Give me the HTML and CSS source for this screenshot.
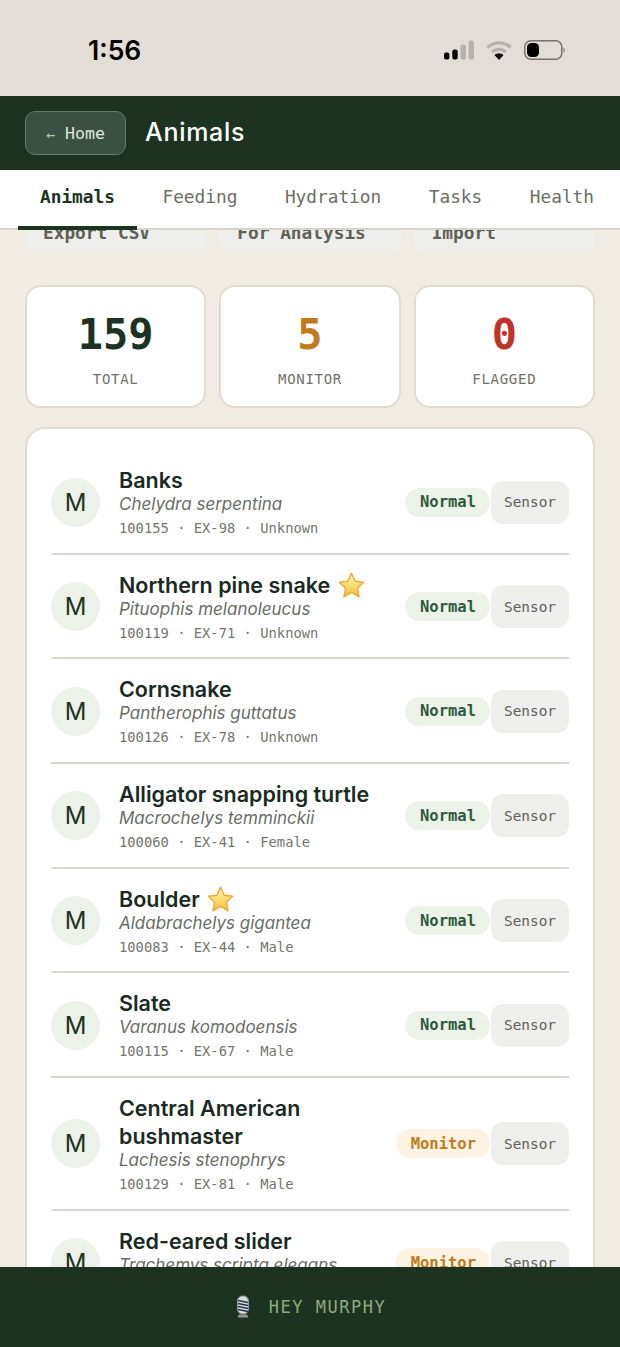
FILE: index.html
```html
<!DOCTYPE html>
<html lang="en">
<head>
    <meta charset="UTF-8">
    <meta name="viewport" content="width=device-width, initial-scale=1.0">
    <title>Animals</title>
    <link rel="stylesheet" href="styles.css">
</head>
<body>
    <svg class="defs" width="0" height="0" aria-hidden="true">
        <defs>
            <linearGradient id="starFill" x1="0" y1="0" x2="0" y2="1">
                <stop offset="0" stop-color="#fff3b8"/>
                <stop offset="0.55" stop-color="#fddc6a"/>
                <stop offset="1" stop-color="#f6b73c"/>
            </linearGradient>
            <symbol id="star" viewBox="0 0 28 28">
                <path d="M14 2.2l3.5 7.7 8.3 1-6.1 5.7 1.6 8.3L14 20.7l-7.3 4.2 1.6-8.3-6.1-5.7 8.3-1z" fill="url(#starFill)" stroke="#eeaa3a" stroke-width="1.4" stroke-linejoin="round"/>
            </symbol>
        </defs>
    </svg>

    <div class="status-bar">
        <span class="clock">1:56</span>
        <div class="status-icons">
            <svg width="30" height="20" viewBox="0 0 30 20">
                <rect x="0" y="12.500" width="5.400" height="7" rx="2" fill="#000"/>
                <rect x="8.300" y="9.500" width="5.400" height="10" rx="2" fill="#000"/>
                <rect x="16.600" y="4.500" width="5.400" height="15" rx="2" fill="#b6b2ab"/>
                <rect x="24.600" y="0.500" width="5.400" height="19" rx="2" fill="#b6b2ab"/>
            </svg>
            <svg width="26" height="20" viewBox="0 0 26 20">
                <path d="M1.500 7.500a16.500 16.500 0 0 1 23 0" fill="none" stroke="#b6b2ab" stroke-width="3.200"/>
                <path d="M6 12a10.500 10.500 0 0 1 14 0" fill="none" stroke="#b6b2ab" stroke-width="3.200"/>
                <path d="M8.500 15a6.500 6.500 0 0 1 9 0L13 20z" fill="#000"/>
            </svg>
            <svg width="41" height="20" viewBox="0 0 41 20">
                <rect x="0.800" y="0.800" width="37" height="18.400" rx="6" fill="none" stroke="#77736d" stroke-width="1.500"/>
                <rect x="3" y="3" width="12" height="14" rx="4.500" fill="#000"/>
                <path d="M39.500 7.500c1.500.5 1.500 4.500 0 5z" fill="#77736d"/>
            </svg>
        </div>
    </div>

    <header class="top-bar">
        <a class="home-btn" href="#"><span class="arrow">←</span><span>Home</span></a>
        <h1>Animals</h1>
    </header>

    <nav class="tabs">
        <a class="tab active" href="#">Animals</a>
        <a class="tab" href="#">Feeding</a>
        <a class="tab" href="#">Hydration</a>
        <a class="tab" href="#">Tasks</a>
        <a class="tab" href="#">Health</a>
    </nav>

    <main class="content">
        <div class="scroll-inner">
            <div class="actions">
                <button>Export CSV</button>
                <button>For Analysis</button>
                <button>Import</button>
            </div>

            <div class="stats">
                <div class="stat">
                    <div class="stat-num">159</div>
                    <div class="stat-label">TOTAL</div>
                </div>
                <div class="stat">
                    <div class="stat-num monitor">5</div>
                    <div class="stat-label">MONITOR</div>
                </div>
                <div class="stat">
                    <div class="stat-num flagged">0</div>
                    <div class="stat-label">FLAGGED</div>
                </div>
            </div>

            <div class="animal-list">
                <div class="animal">
                    <div class="avatar">M</div>
                    <div class="info">
                        <div class="name">Banks</div>
                        <div class="species">Chelydra serpentina</div>
                        <div class="meta">100155 · EX-98 · Unknown</div>
                    </div>
                    <span class="badge normal">Normal</span>
                    <button class="sensor">Sensor</button>
                </div>
                <div class="animal">
                    <div class="avatar">M</div>
                    <div class="info">
                        <div class="name">Northern pine snake <svg class="star"><use href="#star"/></svg></div>
                        <div class="species">Pituophis melanoleucus</div>
                        <div class="meta">100119 · EX-71 · Unknown</div>
                    </div>
                    <span class="badge normal">Normal</span>
                    <button class="sensor">Sensor</button>
                </div>
                <div class="animal">
                    <div class="avatar">M</div>
                    <div class="info">
                        <div class="name">Cornsnake</div>
                        <div class="species">Pantherophis guttatus</div>
                        <div class="meta">100126 · EX-78 · Unknown</div>
                    </div>
                    <span class="badge normal">Normal</span>
                    <button class="sensor">Sensor</button>
                </div>
                <div class="animal">
                    <div class="avatar">M</div>
                    <div class="info">
                        <div class="name">Alligator snapping turtle</div>
                        <div class="species">Macrochelys temminckii</div>
                        <div class="meta">100060 · EX-41 · Female</div>
                    </div>
                    <span class="badge normal">Normal</span>
                    <button class="sensor">Sensor</button>
                </div>
                <div class="animal">
                    <div class="avatar">M</div>
                    <div class="info">
                        <div class="name">Boulder <svg class="star"><use href="#star"/></svg></div>
                        <div class="species">Aldabrachelys gigantea</div>
                        <div class="meta">100083 · EX-44 · Male</div>
                    </div>
                    <span class="badge normal">Normal</span>
                    <button class="sensor">Sensor</button>
                </div>
                <div class="animal">
                    <div class="avatar">M</div>
                    <div class="info">
                        <div class="name">Slate</div>
                        <div class="species">Varanus komodoensis</div>
                        <div class="meta">100115 · EX-67 · Male</div>
                    </div>
                    <span class="badge normal">Normal</span>
                    <button class="sensor">Sensor</button>
                </div>
                <div class="animal">
                    <div class="avatar">M</div>
                    <div class="info">
                        <div class="name">Central American<br>bushmaster</div>
                        <div class="species">Lachesis stenophrys</div>
                        <div class="meta">100129 · EX-81 · Male</div>
                    </div>
                    <span class="badge monitor">Monitor</span>
                    <button class="sensor">Sensor</button>
                </div>
                <div class="animal">
                    <div class="avatar">M</div>
                    <div class="info">
                        <div class="name">Red-eared slider</div>
                        <div class="species">Trachemys scripta elegans</div>
                        <div class="meta">100098 · EX-52 · Female</div>
                    </div>
                    <span class="badge monitor">Monitor</span>
                    <button class="sensor">Sensor</button>
                </div>
            </div>
        </div>
    </main>

    <footer class="voice-bar">
        <svg class="mic" width="18" height="24" viewBox="0 0 18 24">
            <rect x="3.500" y="1" width="11" height="18" rx="5" fill="#d5dadc" stroke="#8d9598" stroke-width="1"/>
            <path d="M4 5.500l10 2M4 8.500l10 2M4 11.500l10 2M4 14.500l10 2" stroke="#2b3350" stroke-width="1.400"/>
            <path d="M5 19.500h8l1.500 3h-11z" fill="#8d9598"/>
        </svg>
        <span>HEY MURPHY</span>
    </footer>
</body>
</html>
```
FILE: styles.css
```css
* {
    box-sizing: border-box;
}
html, body {
    height: 100%;
}
body {
    margin: 0;
    height: 1347px;
    display: flex;
    flex-direction: column;
    overflow: hidden;
    background-color: #f0ebe3;
    color: #1a2e22;
    font-family: Inter, "Liberation Sans", sans-serif;
}
.defs {
    position: absolute;
}
.status-bar {
    height: 96px;
    flex-shrink: 0;
    background-color: #e2ddd6;
    display: flex;
    align-items: center;
    justify-content: space-between;
    padding: 4px 55px 0 88px;
}
.clock {
    font-size: 26.500px;
    font-weight: 600;
    color: #000;
}
.status-icons {
    display: flex;
    align-items: center;
    gap: 12px;
}
.top-bar {
    height: 74px;
    flex-shrink: 0;
    background-color: #1c3322;
    display: flex;
    align-items: center;
    gap: 19px;
    padding: 0 25px;
}
.top-bar h1 {
    margin: 0 0 3px;
    color: #fff;
    font-family: Inter, sans-serif;
    font-size: 25px;
    font-weight: 500;
    letter-spacing: 0.700px;
}
.home-btn {
    width: 101px;
    height: 44px;
    display: flex;
    align-items: center;
    justify-content: center;
    gap: 10px;
    background-color: #3a5040;
    border: 1px solid #66796b;
    border-radius: 10px;
    color: #dfe5df;
    font-family: "DejaVu Sans Mono", monospace;
    font-size: 16.600px;
    text-decoration: none;
}
.home-btn .arrow {
    font-size: 15px;
    margin-top: 3px;
    color: #b8c4ba;
}
.tabs {
    height: 60px;
    flex-shrink: 0;
    position: relative;
    z-index: 1;
    background-color: #fff;
    border-bottom: 2px solid #d8d4cc;
    display: flex;
    padding: 0 18px;
    font-family: "DejaVu Sans Mono", monospace;
    font-size: 17.800px;
}
.tab {
    height: 60px;
    padding: 0 22px 4px;
    display: flex;
    align-items: center;
    border-bottom: 4px solid transparent;
    color: #6b6e64;
    text-decoration: none;
    white-space: nowrap;
    margin-right: 3.500px;
}
.tab.active {
    color: #1c3322;
    font-weight: 700;
    border-bottom-color: #1c3322;
}
.content {
    flex: 1;
    min-height: 0;
    overflow: hidden;
}
.scroll-inner {
    margin-top: -26px;
    padding: 0 25px;
}
.actions {
    display: grid;
    grid-template-columns: repeat(3, 1fr);
    gap: 13px;
    margin-bottom: 34px;
}
.actions button {
    height: 47px;
    padding: 10px 0 0 18px;
    text-align: left;
    background-color: #eeeeec;
    border: none;
    border-radius: 10px;
    color: #5e6158;
    font-family: "DejaVu Sans Mono", monospace;
    font-size: 17.800px;
    font-weight: 700;
}
.stats {
    display: grid;
    grid-template-columns: repeat(3, 1fr);
    gap: 13px;
    margin-bottom: 19px;
}
.stat {
    height: 123px;
    background-color: #fff;
    border: 2px solid #e2dccf;
    border-radius: 16px;
    text-align: center;
    padding-top: 23px;
}
.stat-num {
    font-family: "DejaVu Sans Mono", monospace;
    font-size: 42px;
    font-weight: 700;
    line-height: 50px;
    color: #1c3322;
}
.stat-num.monitor {
    color: #c27a1a;
}
.stat-num.flagged {
    color: #c0332b;
}
.stat-label {
    margin-top: 11px;
    font-family: "DejaVu Sans Mono", monospace;
    font-size: 14px;
    letter-spacing: 0.700px;
    color: #6f7168;
}
.animal-list {
    background-color: #fff;
    border: 2px solid #e2dccf;
    border-radius: 20px;
    padding: 21px 24px 19px;
}
.animal {
    display: flex;
    align-items: center;
    padding: 16px 0 14.670px;
    border-bottom: 2px solid #dbd6cb;
}
.avatar {
    width: 49px;
    height: 49px;
    flex-shrink: 0;
    margin-right: 19px;
    border-radius: 50%;
    background-color: #edf2e8;
    display: flex;
    align-items: center;
    justify-content: center;
    font-size: 24px;
    color: #1c3322;
}
.info {
    flex: 1;
    min-width: 0;
}
.name {
    font-size: 21.500px;
    font-weight: 600;
    line-height: 28px;
    color: #1a2a22;
}
.star {
    width: 29px;
    height: 29px;
    margin: -6px 0 -6px 1px;
    vertical-align: -1px;
}
.species {
    font-size: 17px;
    font-style: italic;
    line-height: 20px;
    color: #6a6d66;
}
.meta {
    margin-top: 4px;
    font-family: "DejaVu Sans Mono", monospace;
    font-size: 13.800px;
    line-height: 20px;
    color: #74766e;
}
.badge {
    flex-shrink: 0;
    height: 29px;
    margin-right: 1px;
    padding: 0 14px 0 15px;
    display: flex;
    align-items: center;
    border-radius: 15px;
    font-family: "DejaVu Sans Mono", monospace;
    font-size: 15.500px;
    font-weight: 700;
}
.badge.normal {
    background-color: #edf2e8;
    color: #2d5a3a;
}
.badge.monitor {
    background-color: #fdf3e3;
    color: #c27a1a;
}
.sensor {
    flex-shrink: 0;
    width: 78px;
    height: 43px;
    padding: 0;
    background-color: #eeeeec;
    border: none;
    border-radius: 12px;
    color: #5e6158;
    font-family: "DejaVu Sans Mono", monospace;
    font-size: 14.400px;
}
.voice-bar {
    height: 80px;
    flex-shrink: 0;
    background-color: #1c3322;
    display: flex;
    align-items: center;
    justify-content: center;
    gap: 17px;
    color: #8fa97f;
    font-family: "DejaVu Sans Mono", monospace;
    font-size: 17px;
    letter-spacing: 1.500px;
}
```
